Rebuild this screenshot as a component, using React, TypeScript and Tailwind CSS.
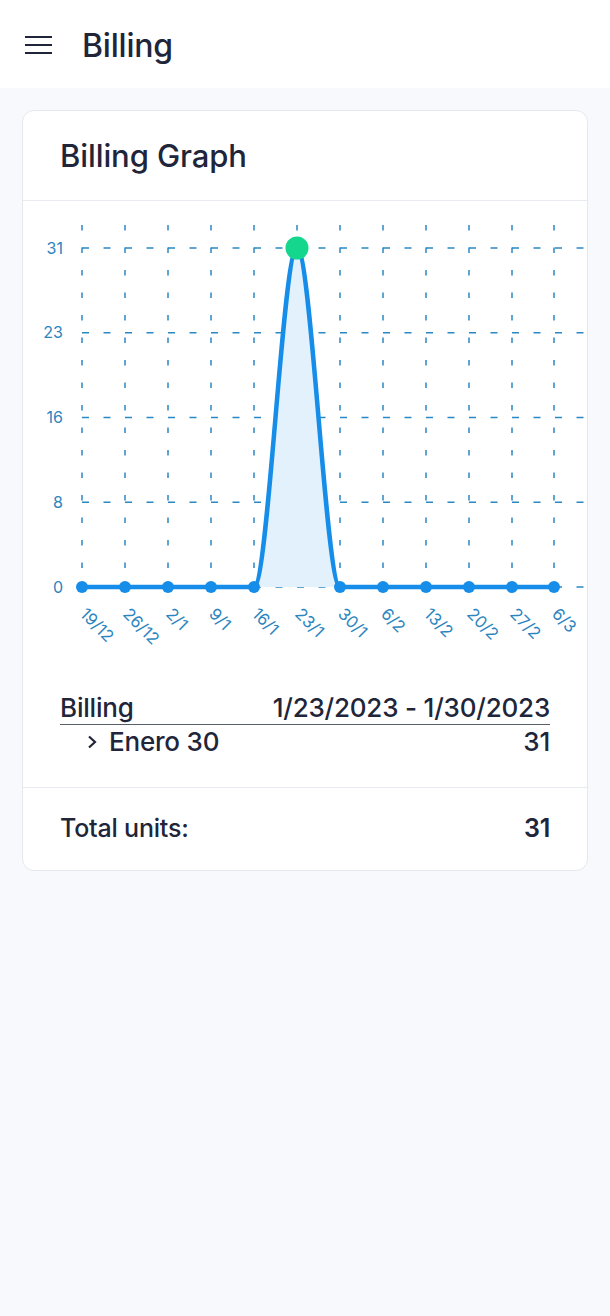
import React from "react";

const xs = [81, 124, 167, 210, 253, 296, 339, 382, 425, 468, 511, 553];
const labels = ["19/12", "26/12", "2/1", "9/1", "16/1", "23/1", "30/1", "6/2", "13/2", "20/2", "27/2", "6/3"];
const ys = [248, 332.75, 417.5, 502.25, 587];
const yLabels = ["31", "23", "16", "8", "0"];
const GRID = "#2a88c4";
const LINE = "#168de8";

function Chart() {
  const base = 587;
  const top = 248;
  const curve = `M81 ${base} L253 ${base} C267.33 ${base} 281.67 ${top} 296 ${top} C310.33 ${top} 324.67 ${base} 339 ${base} L553 ${base}`;
  const area = `M253 ${base} C267.33 ${base} 281.67 ${top} 296 ${top} C310.33 ${top} 324.67 ${base} 339 ${base} Z`;
  return (
    <svg width={565} height={479} viewBox="22 201 565 479" className="block">
      {xs.map((x) => (
        <line key={"v" + x} x1={x} y1={225} x2={x} y2={base} stroke={GRID} strokeWidth={1.5} strokeDasharray="5.5 17" />
      ))}
      {ys.map((y) => (
        <line key={"h" + y} x1={81} y1={y} x2={585} y2={y} stroke={GRID} strokeWidth={1.5} strokeDasharray="7 14.5" />
      ))}
      {ys.map((y, i) => (
        <text key={"yl" + i} x={62} y={y} dy="0.35em" textAnchor="end" fontSize={16} fontWeight={400} fill="#2a85bf" fontFamily="Inter, sans-serif">
          {yLabels[i]}
        </text>
      ))}
      <path d={area} fill="#e3f1fc" />
      <path d={curve} fill="none" stroke={LINE} strokeWidth={4.5} strokeLinejoin="round" />
      {xs.map((x, i) =>
        i === 5 ? null : <circle key={"c" + x} cx={x} cy={base} r={6} fill={LINE} />
      )}
      <circle cx={296} cy={top} r={11.5} fill="#14d68d" />
      {xs.map((x, i) => (
        <text
          key={"xl" + i}
          x={x + 1}
          y={611}
          dy="0.35em"
          transform={`rotate(45 ${x + 1} 611)`}
          fontSize={16.5}
          fontWeight={400}
          fill="#2a85bf"
          fontFamily="Inter, sans-serif"
        >
          {labels[i]}
        </text>
      ))}
    </svg>
  );
}

export default function App() {
  return (
    <div className="min-h-[1316px] bg-[#f8f9fc] text-[#21253a] font-medium" style={{ fontFamily: "Inter, 'Noto Sans', sans-serif" }}>
      <header className="h-[88px] bg-white flex items-center pl-[25px]">
        <div className="flex flex-col gap-[5.5px] w-[27px] mt-[2px]">
          <span className="block h-[2.5px] bg-[#21253a]" />
          <span className="block h-[2.5px] bg-[#21253a]" />
          <span className="block h-[2.5px] bg-[#21253a]" />
        </div>
        <h1 className="ml-[30px] text-[32px] leading-none tracking-[-0.2px] mt-[4px]">Billing</h1>
      </header>
      <div className="px-[22px] pt-[22px]">
        <div className="bg-white border border-[#e6e8ee] rounded-[12px] overflow-hidden">
          <div className="h-[90px] flex items-center px-[37px] border-b border-[#e8eaef]">
            <h2 className="text-[31px] leading-none tracking-[-0.1px] pb-[1px]">Billing Graph</h2>
          </div>
          <Chart />
          <div className="px-[37px] pb-[28px] pt-[13px]">
            <div className="flex justify-between items-end border-b border-[#5b5e6b] pb-[1px] text-[26px] leading-[30px] tracking-[-0.2px]">
              <span>Billing</span>
              <span>1/23/2023 - 1/30/2023</span>
            </div>
            <div className="flex justify-between items-center text-[26px] leading-[34px] tracking-[-0.2px]">
              <span className="flex items-center pl-[25px]">
                <svg width="14" height="16" viewBox="0 0 14 16" className="mr-[10px]">
                  <path d="M4 2.5 L10 8 L4 13.5" fill="none" stroke="#21253a" strokeWidth={2.2} />
                </svg>
                Enero 30
              </span>
              <span>31</span>
            </div>
          </div>
          <div className="h-[83px] flex items-center justify-between px-[37px] border-t border-[#e8eaef] text-[25px] tracking-[-0.2px]">
            <span>Total units:</span>
            <span className="font-semibold">31</span>
          </div>
        </div>
      </div>
    </div>
  );
}
